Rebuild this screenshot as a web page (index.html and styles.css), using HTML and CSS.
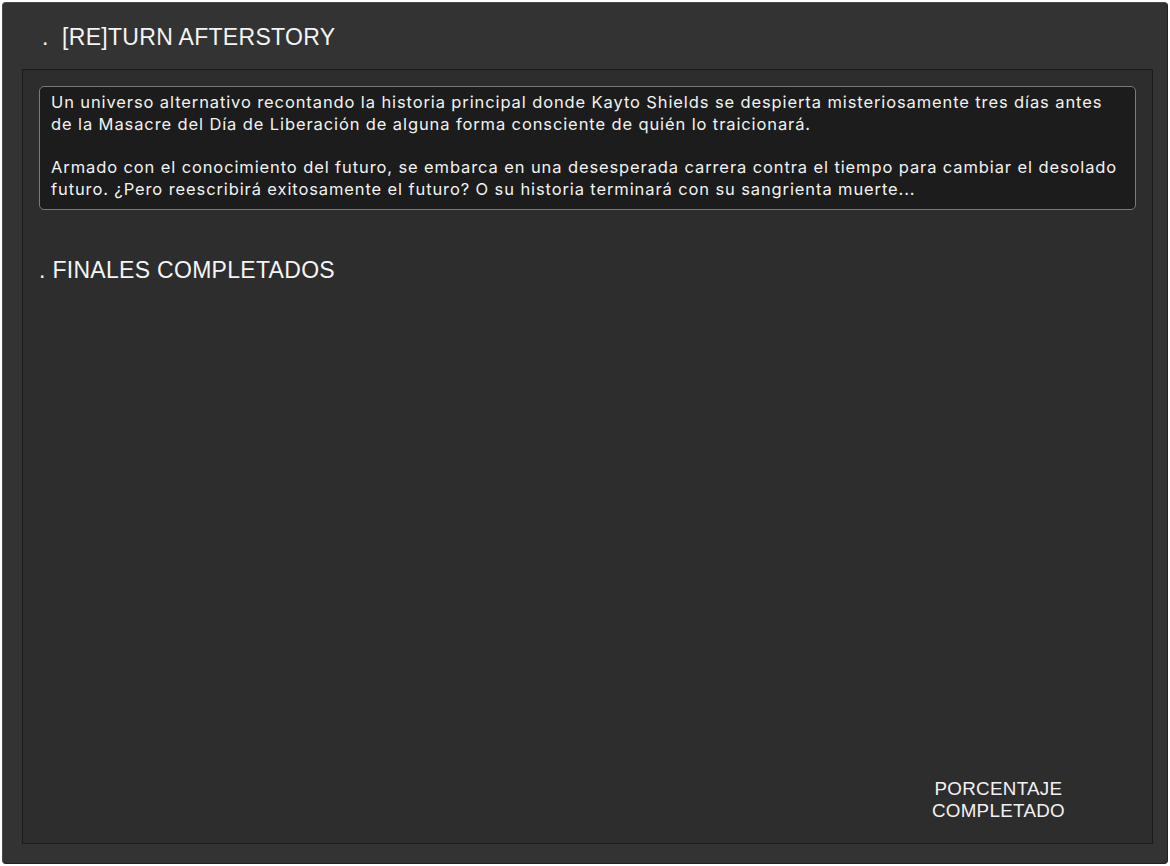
FILE: index.html
```html
<!DOCTYPE html>
<html lang="es">
<head>
<meta charset="utf-8">
<title>[RE]TURN AFTERSTORY</title>
<link rel="stylesheet" href="styles.css">
</head>
<body>
<div class="window">
  <h1 class="title">.&nbsp;&nbsp;[RE]TURN AFTERSTORY</h1>
  <div class="panel">
    <div class="desc">
      <p>Un universo alternativo recontando la historia principal donde Kayto Shields se despierta misteriosamente tres días antes de la Masacre del Día de Liberación de alguna forma consciente de quién lo traicionará.</p>
      <p>Armado con el conocimiento del futuro, se embarca en una desesperada carrera contra el tiempo para cambiar el desolado futuro. ¿Pero reescribirá exitosamente el futuro? O su historia terminará con su sangrienta muerte...</p>
    </div>
    <h2 class="section">. FINALES COMPLETADOS</h2>
    <div class="spacer"></div>
    <div class="footer">
      <div class="percent">PORCENTAJE<br>COMPLETADO</div>
    </div>
  </div>
</div>
</body>
</html>
```

FILE: styles.css
```css
html, body {
  margin: 0;
  padding: 0;
  background: #ffffff;
}
body {
  padding: 2px;
  box-sizing: border-box;
  width: 1170px;
  height: 866px;
}
.window {
  box-sizing: border-box;
  width: 1166px;
  height: 862px;
  background: #333333;
  border: 1px solid #4a4a4a;
  border-right-color: #222222;
  border-bottom-color: #222222;
  border-radius: 4px;
  padding: 0 14px 19px 19px;
  display: flex;
  flex-direction: column;
  color: #f2f2f2;
}
.title {
  margin: 0;
  height: 66px;
  padding-left: 20px;
  font-family: "Liberation Sans", Arial, sans-serif;
  font-weight: normal;
  font-size: 23px;
  line-height: 68px;
  letter-spacing: 0.3px;
  color: #f4f4f4;
  white-space: pre;
}
.panel {
  flex: 1;
  background: #2d2d2d;
  border: 1px solid #1b1b1b;
  padding: 16px 16px 0 16px;
  display: flex;
  flex-direction: column;
}
.desc {
  background: #1c1c1c;
  border: 1px solid #7a7a7a;
  border-radius: 5px;
  padding: 4px 12px 9px 11px;
  font-family: Inter, "Noto Sans", sans-serif;
  font-size: 16.5px;
  line-height: 22px;
  letter-spacing: 0.89px;
  color: #f2f2f2;
}
.desc p {
  margin: 0;
}
.desc p + p {
  margin-top: 21px;
}
.section {
  margin: 48px 0 0 0;
  font-family: "Liberation Sans", Arial, sans-serif;
  font-weight: normal;
  font-size: 23px;
  line-height: 24px;
  letter-spacing: 0.3px;
  color: #f4f4f4;
}
.spacer {
  flex: 1;
}
.footer {
  display: flex;
  justify-content: flex-end;
  padding-right: 71px;
  padding-bottom: 21px;
}
.percent {
  font-family: "Liberation Sans", Arial, sans-serif;
  font-size: 18.8px;
  line-height: 22px;
  text-align: center;
  letter-spacing: 0.3px;
  color: #f2f2f2;
}
```
